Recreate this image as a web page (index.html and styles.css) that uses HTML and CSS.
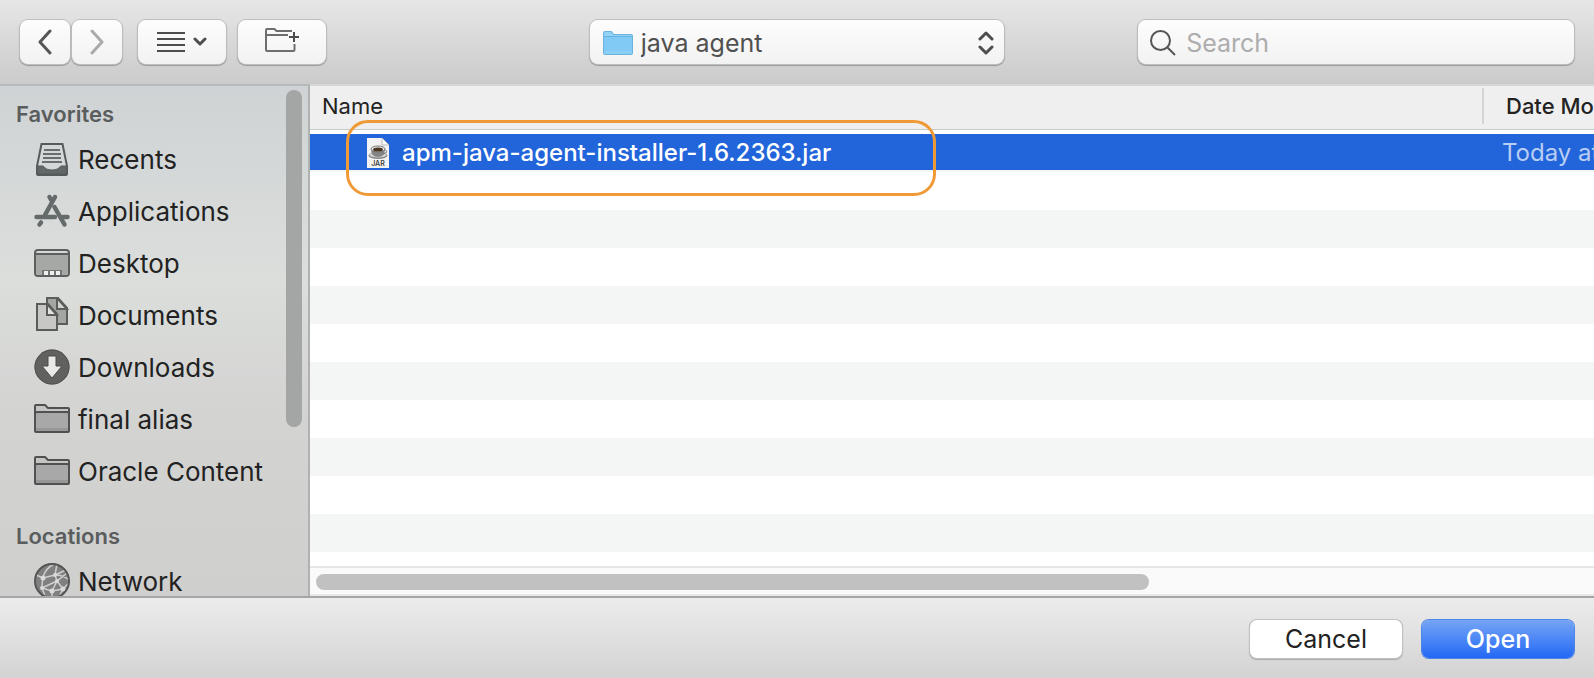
FILE: index.html
```html
<!DOCTYPE html>
<html lang="en">
<head>
<meta charset="utf-8">
<title>Open</title>
<link rel="stylesheet" href="styles.css">
</head>
<body>
<div class="dialog">
  <header class="toolbar">
    <div class="tools">
      <div class="history">
        <button class="tool nav-button" type="button" aria-label="Back">
          <svg width="16" height="26" viewBox="0 0 16 26"><path d="M13 2 3 13l10 11" fill="none" stroke="#555" stroke-width="3" stroke-linecap="round" stroke-linejoin="round"/></svg>
        </button>
        <button class="tool nav-button" type="button" aria-label="Forward">
          <svg width="16" height="26" viewBox="0 0 16 26"><path d="m3 2 10 11L3 24" fill="none" stroke="#aaa" stroke-width="3" stroke-linecap="round" stroke-linejoin="round"/></svg>
        </button>
      </div>
      <button class="tool wide-button" type="button" aria-label="View options">
        <svg width="50" height="22" viewBox="0 0 50 22"><path d="M0 2h28M0 8h28M0 14h28M0 20h28" stroke="#4d4d4d" stroke-width="2"/><path d="m38 8 5 5 5-5" fill="none" stroke="#4d4d4d" stroke-width="3" stroke-linecap="round" stroke-linejoin="round"/></svg>
      </button>
      <button class="tool wide-button" type="button" aria-label="New folder">
        <svg class="new-folder" width="36" height="26" viewBox="0 0 36 26"><path d="M28 4H12.500L10.500 2H3Q2 2 2 3v20q0 1 1 1h26q1.500 0 1.500-1.500V17M2 8h22" fill="none" stroke="#6e6e6e" stroke-width="2"/><path d="M30 5v10M25 10h10" stroke="#4d4d4d" stroke-width="2"/></svg>
      </button>
    </div>
    <div class="field location">
      <svg width="30" height="24" viewBox="0 0 30 24"><path d="M0 2Q0 0 2 0h6.500l2.500 3h17q2 0 2 2v17q0 2-2 2H2q-2 0-2-2z" fill="#69b4df"/><path d="M1 2q0-1 1-1h6l2.500 3H28q1 0 1 1H1z" fill="#93d2f5"/><path d="M1 6h28v14H1z" fill="#80caf5"/><path d="M1 20h28v2q0 1-1 1H2q-1 0-1-1z" fill="#8ccff6"/></svg>
      <select class="location-select" aria-label="Folder"><option>java agent</option></select>
      <svg width="16" height="26" viewBox="0 0 16 26"><path d="m2 9 6-6 6 6M2 17l6 6 6-6" fill="none" stroke="#4d4d4d" stroke-width="3" stroke-linecap="round" stroke-linejoin="round"/></svg>
    </div>
    <label class="field search">
      <svg width="26" height="26" viewBox="0 0 26 26"><circle cx="10.500" cy="10.500" r="9.500" fill="none" stroke="#555" stroke-width="2"/><path d="m17 17 8 8" stroke="#555" stroke-width="2"/></svg>
      <input class="search-input" type="text" placeholder="Search" aria-label="Search">
    </label>
  </header>

  <main class="browser">
    <aside class="sidebar">
      <nav class="places">
        <h2 class="group-title">Favorites</h2>
        <ul class="place-list">
          <li><a class="place" href="#"><svg width="36" height="36" viewBox="0 0 36 36"><path d="M7.500 3h21l4.500 22v8q0 1-1 1H4q-1 0-1-1v-8z" fill="none" stroke="#555b5b" stroke-width="2"/><path d="M10 9h16M9 13h18M9 17h18M8 21h20" stroke="#686e6e" stroke-width="2"/><path d="M3 25h6c1 0 2 4 9 4s8-4 9-4h6l-1 8H4z" fill="#626868" stroke="#555b5b" stroke-width="1"/></svg>Recents</a></li>
          <li><a class="place" href="#"><svg width="36" height="36" viewBox="0 0 36 36" fill="none" stroke="#656a6a" stroke-width="4.500" stroke-linecap="round"><path d="M21 4 11 22M15.500 4l2 3.500"/><path d="M2.500 24h18.500M29 24h4.500M7 29.500 5.500 31.500"/><path d="M20.500 14 30.500 31.500"/></svg>Applications</a></li>
          <li><a class="place" href="#"><svg width="36" height="36" viewBox="0 0 36 36"><rect x="1" y="5" width="34" height="26" rx="3" fill="#d5d7d4" stroke="#5c5f5d" stroke-width="2"/><path d="M2 9h32v18q0 3-3 3H5q-3 0-3-3z" fill="#a6a8a5"/><path d="M1 9h34" stroke="#5c5f5d" stroke-width="2"/><path d="M8 25h20v5H8z" fill="#737573"/><path d="M10 26h4v4h-4zM16 26h4v4h-4zM22 26h4v4h-4z" fill="#eee"/></svg>Desktop</a></li>
          <li><a class="place" href="#"><svg width="36" height="36" viewBox="0 0 36 36" stroke="#5b5d5b" stroke-width="2"><path d="M13 1h11l9 10v16H13z" fill="#a4a6a4"/><path d="M23 1v11h10z" fill="#d0d2d0"/><path d="M3 7h11l9 10v16H3z" fill="#c7c8c6"/><path d="M13 7v11h10z" fill="#e1e2e0"/></svg>Documents</a></li>
          <li><a class="place" href="#"><svg width="36" height="36" viewBox="0 0 36 36"><circle cx="18" cy="18" r="17.500" fill="#616160"/><circle cx="18" cy="18" r="17" fill="none" stroke="#505050"/><path d="M14 7h8v10h6L18 29 8 17h6z" fill="#e9e9e8" stroke="#4d4d4d" stroke-width="1"/></svg>Downloads</a></li>
          <li><a class="place" href="#"><svg width="36" height="36" viewBox="0 0 36 36"><path d="M1 5q0-1 1-1h9l3 3h20q1 0 1 1v22q0 1-1 1H2q-1 0-1-1z" fill="#c5c5c4" stroke="#515151" stroke-width="2"/><path d="M2 12h32v18H2z" fill="#a8a8a8"/><path d="M2 27h32v3H2z" fill="#979797"/><path d="M1 13q0-2 2-2h30q2 0 2 2" fill="none" stroke="#515151" stroke-width="2"/></svg>final alias</a></li>
          <li><a class="place" href="#"><svg width="36" height="36" viewBox="0 0 36 36"><path d="M1 5q0-1 1-1h9l3 3h20q1 0 1 1v22q0 1-1 1H2q-1 0-1-1z" fill="#c5c5c4" stroke="#515151" stroke-width="2"/><path d="M2 12h32v18H2z" fill="#a8a8a8"/><path d="M2 27h32v3H2z" fill="#979797"/><path d="M1 13q0-2 2-2h30q2 0 2 2" fill="none" stroke="#515151" stroke-width="2"/></svg>Oracle Content</a></li>
        </ul>
        <h2 class="group-title locations-title">Locations</h2>
        <ul class="place-list">
          <li><a class="place" href="#"><svg width="36" height="36" viewBox="0 0 36 36"><circle cx="18" cy="18" r="17.500" fill="#808080"/><g fill="none" stroke="#cfcfcf" stroke-width="1.500"><path d="M2 12l7 3 12-3 11-5M9 15C10 9 14 4 20 1M21 12l2-11M21 12c5 0 10 1 14 5M21 12l2 6 10-8M23 18l-5 10M23 18l6 8M9 15c-1 4-1 8-1 10M8 25l10 3 11-2 5-5M23 18 8 25M18 28v8M29 26l-4 8M8 25l3 8"/></g><g fill="#dadada"><circle cx="9" cy="15" r="2.500"/><circle cx="21" cy="12" r="2"/><circle cx="23" cy="18" r="2"/><circle cx="8" cy="25" r="2"/><circle cx="18" cy="28" r="2.500"/><circle cx="29" cy="26" r="2.500"/></g><circle cx="18" cy="18" r="17" fill="none" stroke="#565656" stroke-width="2"/></svg>Network</a></li>
        </ul>
      </nav>
      <div class="vertical-thumb"></div>
    </aside>

    <section class="files">
      <table class="file-table">
        <thead>
          <tr><th class="name-head" scope="col"><span class="name-label">Name</span></th><th class="date-head" scope="col"><span class="date-label">Date Modified</span></th></tr>
        </thead>
        <tbody>
          <tr class="selected">
            <td class="name-cell"><div class="file-name"><svg width="24" height="32" viewBox="0 0 24 32"><path d="M1 1h15l7 7v23H1z" fill="#f3f3f3"/><path d="M16 1v7h7z" fill="#fff" stroke="#bbb" stroke-width="1"/><ellipse cx="12" cy="18.500" rx="9.500" ry="3.500" fill="#888"/><ellipse cx="12" cy="18" rx="8.500" ry="2.500" fill="#d5d5d5"/><path d="M5 12h14q0 8-7 8t-7-8z" fill="#858585"/><path d="M18 13q4 0 2 3l-4 1" fill="none" stroke="#777" stroke-width="1"/><ellipse cx="12" cy="12" rx="7" ry="3" fill="#eee" stroke="#777" stroke-width="1"/><ellipse cx="12" cy="12.500" rx="5" ry="2" fill="#493621"/><text class="jar-label" x="12" y="29" text-anchor="middle">JAR</text></svg><span class="file-label">apm-java-agent-installer-1.6.2363.jar</span></div></td>
            <td class="date-cell">Today at</td>
          </tr>
        </tbody>
      </table>
      <div class="horizontal-track"><div class="horizontal-thumb"></div></div>
      <div class="highlight"></div>
    </section>
  </main>

  <footer class="actions">
    <button class="action cancel" type="button">Cancel</button>
    <button class="action open" type="submit">Open</button>
  </footer>
</div>
</body>
</html>
```
FILE: styles.css
```css
* { box-sizing: border-box; }

body {
  margin: 0;
  font-family: Inter, "Liberation Sans", sans-serif;
  font-size: 25px;
  color: #222;
}

button, select, input { font: inherit; color: inherit; }
svg { display: block; flex: none; }

.dialog {
  display: flex;
  flex-direction: column;
  height: 100vh;
  overflow: hidden;
}

.toolbar {
  display: grid;
  grid-template-columns: 1fr 26vw 1fr;
  align-items: center;
  height: 84px;
  padding: 0 20px;
  background: linear-gradient(#e6e6e6, #cbcbcb);
}

.tools { display: flex; gap: 12px; }
.history { display: flex; gap: 2px; margin-right: 4px; }

.tool, .field {
  height: 44px;
  border: 0;
  border-radius: 8px;
  background: linear-gradient(#fdfdfd, #f2f2f2);
  box-shadow: 0 0 0 1px #bdbdbd, 0 1px 1px 1px #999;
}

.tool {
  display: flex;
  align-items: center;
  justify-content: center;
  padding: 0;
}

.nav-button { width: 50px; }
.wide-button { width: 88px; }
.new-folder { margin-bottom: 4px; }

.field { display: flex; align-items: center; color: #505050; }
.location { gap: 8px; padding: 2px 10px 0 13px; }

.location-select {
  flex: 1;
  min-width: 0;
  padding: 0;
  border: 0;
  appearance: none;
  background: none;
}

.search { justify-self: end; width: 76.5%; gap: 10px; padding: 2px 12px 0; }

.search-input {
  flex: 1;
  min-width: 0;
  padding: 0;
  border: 0;
  background: none;
}

.search-input::placeholder { color: #adadad; opacity: 1; }

.browser { display: flex; flex: 1; min-height: 0; }

.sidebar {
  display: flex;
  flex: none;
  width: 310px;
  overflow: hidden;
  border-top: 2px solid #b7baba;
  border-right: 2px solid #b0b1b1;
  background: linear-gradient(#cfd3d5, #dbdedb 38%, #d3d3d2 65%, #cfcfce);
}

.places { flex: 1; padding-top: 9px; }

.group-title {
  margin: 0;
  padding-left: 16px;
  font-size: 22px;
  line-height: 38px;
  font-weight: 600;
  color: #5a5d5d;
}

.locations-title { margin-top: 20px; }
.place-list { margin: 0; padding: 0; list-style: none; }

.place {
  display: flex;
  align-items: center;
  gap: 8px;
  height: 52px;
  padding-left: 34px;
  font-size: 26px;
  color: #222;
  text-decoration: none;
  white-space: nowrap;
}

.vertical-thumb {
  width: 16px;
  height: 66%;
  margin: 4px 6px 0 0;
  border-radius: 8px;
  background: #a4a6a5;
}

.files {
  position: relative;
  display: flex;
  flex: 1;
  flex-direction: column;
  min-width: 0;
  overflow: hidden;
  border-top: 2px solid #d7d7d7;
  background: repeating-linear-gradient(#f4f5f5 0 38px, #fff 38px 76px) 0 48px no-repeat;
}

.file-table {
  width: 100%;
  table-layout: fixed;
  border-collapse: separate;
  border-spacing: 0;
  white-space: nowrap;
}

th {
  height: 44px;
  padding: 0 0 4px;
  border-bottom: 1px solid #c9c9c9;
  background: #efefef;
  font-size: 22px;
  text-align: left;
}

.name-head { font-weight: 400; }
.name-label { display: block; padding-left: 12px; line-height: 36px; }
.date-head { width: 112px; font-weight: 500; }

.date-label {
  display: block;
  padding-left: 22px;
  border-left: 2px solid #d5d5d5;
  line-height: 36px;
}

tbody::before { content: ""; display: block; height: 4px; background: #fff; }
td { height: 36px; padding: 0; background: #2265da; }

.file-name {
  display: flex;
  align-items: center;
  gap: 12px;
  height: 36px;
  padding: 2px 0 0 56px;
  font-size: 24px;
  line-height: 34px;
  font-weight: 450;
  color: #fff;
}

.date-cell { padding: 2px 0 0 20px; font-size: 24px; line-height: 34px; color: #b9cef3; }
.jar-label { font-size: 7px; font-weight: 600; fill: #444; }

.horizontal-track {
  height: 30px;
  margin-top: auto;
  padding: 6px;
  border-top: 2px solid #e6e6e6;
  border-bottom: 2px solid #e9e9e9;
  background: #fafafa;
}

.horizontal-thumb {
  width: 65.5%;
  height: 16px;
  border-radius: 8px;
  background: #c1c1c1;
}

.highlight {
  position: absolute;
  top: 34px;
  left: 36px;
  width: 590px;
  height: 76px;
  border: 3px solid #f09a37;
  border-radius: 22px;
}

.actions {
  display: flex;
  align-items: center;
  justify-content: flex-end;
  gap: 20px;
  height: 82px;
  padding: 2px 20px 0;
  border-top: 2px solid #a6a6a6;
  background: linear-gradient(#ececec, #d3d3d3);
}

.action {
  width: 152px;
  height: 38px;
  padding: 0;
  border: 0;
  border-radius: 7px;
}

.cancel { background: #fff; box-shadow: 0 0 0 1px #c0c0c0, 0 1px 1px 1px #aaa; }
.open { background: linear-gradient(#76a5f5, #2369f6); box-shadow: 0 0 0 1px #4c84e8; color: #fff; font-weight: 500; }
```
